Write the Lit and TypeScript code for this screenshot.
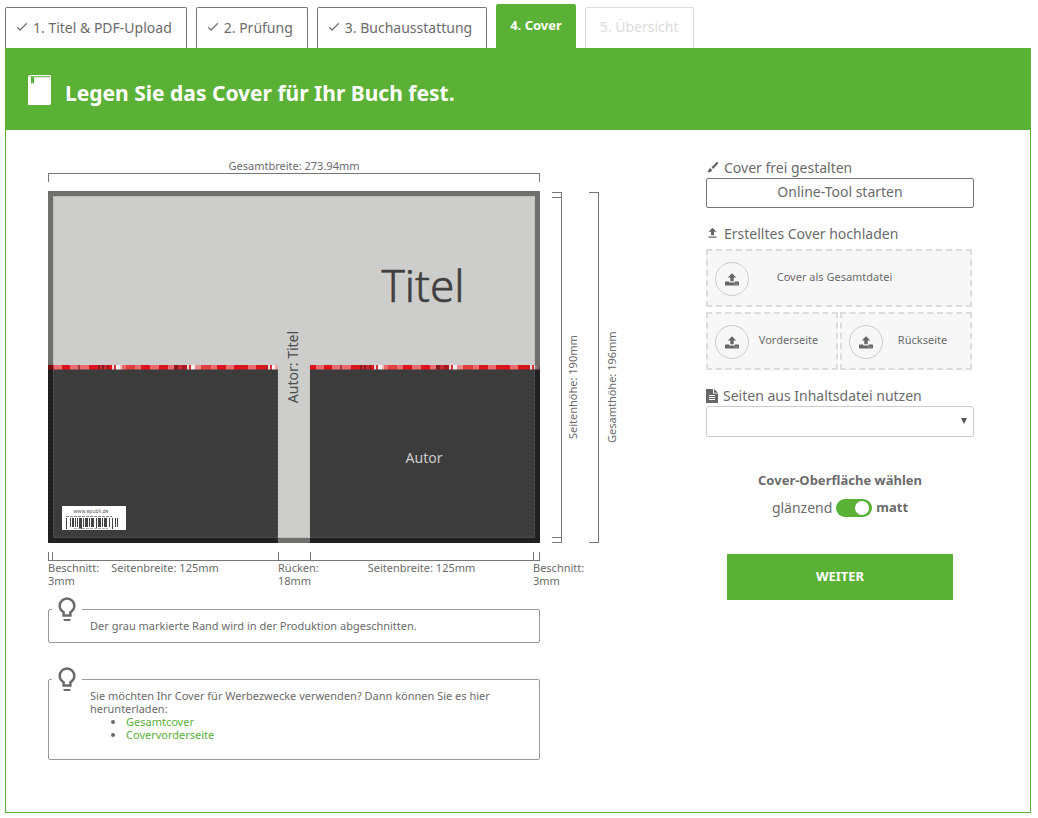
import { LitElement, html, css, svg } from "lit";
import { customElement, state } from "lit/decorators.js";

type Step = { label: string; state: "done" | "active" | "open" };

const STEPS: Step[] = [
  { label: "1. Titel & PDF-Upload", state: "done" },
  { label: "2. Prüfung", state: "done" },
  { label: "3. Buchausstattung", state: "done" },
  { label: "4. Cover", state: "active" },
  { label: "5. Übersicht", state: "open" },
];

// Colour runs of the decorative band: [start, width, colour]
const BAND: [number, number, string][] = [
  [0, 6, "#e2101c"], [6, 8, "#ea6a6e"], [14, 8, "#dc141e"], [22, 8, "#ea6a6e"], [30, 2, "#a83a3e"],
  [32, 9, "#ea6a6e"], [41, 9, "#dc141e"], [50, 2, "#8e1820"], [52, 2, "#c42a30"], [54, 2, "#8e1820"],
  [56, 3, "#c42a30"], [59, 2, "#9e1820"], [61, 3, "#dc141e"], [64, 2, "#f6d6d6"], [66, 2, "#d8303a"],
  [68, 4, "#fbf0ee"], [72, 2, "#f3b9b9"], [74, 4, "#ea6a6e"], [78, 9, "#e2403e"],
  [87, 6, "#ea6a6e"], [93, 9, "#dc141e"], [102, 9, "#ea6a6e"], [111, 9, "#dc141e"], [120, 6, "#ea6a6e"],
  [126, 4, "#8e1820"], [130, 4, "#c42a30"], [134, 5, "#a81820"], [139, 2, "#f6d6d6"],
  [141, 2, "#d8303a"], [143, 4, "#fbf0ee"], [147, 6, "#ea8a8c"], [153, 10, "#e2403e"], [163, 6, "#ea6a6e"],
  [169, 9, "#dc141e"], [178, 8, "#ea6a6e"], [186, 14, "#dc141e"], [200, 8, "#ea6a6e"], [208, 9, "#dc141e"],
  [217, 3, "#c41a20"], [220, 2, "#f6d6d6"], [222, 2, "#d8303a"], [224, 3, "#fbf0ee"], [227, 3, "#f3a9aa"],
];

// Barcode strokes: [start, width]
const BARS: [number, number][] = [
  [0, 1], [4, 1], [6, 2], [9, 1], [11, 1], [13, 3], [17, 1], [19, 3], [23, 1], [25, 3],
  [30, 1], [32, 3], [36, 1], [38, 3], [43, 1], [46, 1], [49, 1], [51, 1],
];

@customElement("app-root")
export class AppRoot extends LitElement {
  @state() private matt = true;

  static styles = css`
    :host {
      display: block;
      box-sizing: border-box;
      padding: 4px 7px 5px 5px;
      color: #6b6b6b;
      background: #fff;
      font: 14px/19px "Noto Sans", sans-serif;
      --green: #5bb036;
    }
    *, *::before, *::after { box-sizing: border-box; }
    button, select { font: inherit; color: inherit; }
    svg { display: block; flex: none; }

    .tabs { display: flex; align-items: flex-end; gap: 9px; }
    .tab {
      display: flex; align-items: center; gap: 5px;
      height: 41px; padding: 0 14px 2px 10px;
      border: 1px solid #777; border-bottom: 0; border-radius: 2px 2px 0 0;
      background: #fff; white-space: nowrap;
    }
    .tab.active {
      height: 44px; padding: 0 14px 2px; border: 0;
      background: var(--green); color: #fff; font-size: 13px; font-weight: 700;
    }
    .tab.open { padding: 0 14px 4px; color: #dcdcdc; border-color: #dcdcdc; }

    .panel { border: 1px solid var(--green); border-top: 0; }
    .head {
      display: flex; align-items: center; gap: 14px;
      padding: 23px 22px 22px; background: var(--green); color: #fff;
    }
    h1 { margin: 0; padding-top: 7px; font-size: 21px; line-height: 30px; font-weight: 700; }
    .body {
      display: grid; grid-template-columns: minmax(0, 1fr) 268px;
      gap: 86px; padding: 28px 56px 52px 42px;
    }

    .design {
      display: grid; grid-template-columns: minmax(0, 1fr) 25px 31px;
      column-gap: 12px; font-size: 11px; line-height: 13px;
    }
    .total { text-align: center; padding: 1px 0; }
    .total-rule { height: 9px; border: 1px solid #777; border-bottom: 0; margin-bottom: 9px; }
    .cover { width: 100%; height: auto; }
    .side { display: flex; align-items: stretch; gap: 4px; padding-top: 1px; }
    .side.outer { gap: 6px; }
    .side span {
      writing-mode: vertical-rl; transform: rotate(180deg);
      text-align: center; white-space: nowrap; margin-top: 40px;
    }
    .bracket { width: 10px; flex: none; border: 1px solid #777; border-left: 0; }
    .bracket.inner { padding: 4px 0; }
    .bracket.inner::before {
      content: ""; display: block; height: 100%;
      border: 1px solid #777; border-width: 1px 0;
    }
    .widths {
      display: grid;
      grid-template-columns:
        minmax(0, 4fr) minmax(0, 226fr) minmax(0, 32fr) minmax(0, 223fr) minmax(0, 7fr);
      margin-top: 9px;
    }
    .tick { height: 9px; border: 1px solid #777; border-width: 0 0 1px 1px; }
    .tick:last-of-type { border-right-width: 1px; }
    .widths span { text-align: center; white-space: nowrap; }
    .widths .edge { text-align: left; }
    .first { grid-column: 1; }

    .notes { grid-column: 1; display: grid; gap: 36px; margin-top: 22px; }
    .note {
      position: relative; padding: 9px 40px 10px 41px;
      border: 1px solid #999; border-radius: 2px;
    }
    .note p, .note ul { margin: 0; }
    .note ul { padding-left: 36px; margin-bottom: 8px; }
    .note a { color: var(--green); text-decoration: none; }
    .bulb { position: absolute; left: 3px; top: -13px; background: #fff; }

    .options { display: flex; flex-direction: column; }
    .caption { display: flex; align-items: center; gap: 5px; margin-bottom: 1px; white-space: nowrap; }
    .tool {
      height: 30px; margin-bottom: 16px; padding: 0 0 3px;
      border: 1px solid #777; border-radius: 2px; background: #fff;
    }
    .uploads {
      display: grid; grid-template-columns: 1fr 1fr; gap: 5px 2px;
      margin: 5px 2px 16px 0; font-size: 11px;
    }
    .drop {
      position: relative;
      display: flex; align-items: center; height: 58px; padding: 2px 8px 0 7px;
      border: 2px dashed #dcdcdc; background: #f7f7f7;
      text-align: center; cursor: pointer;
    }
    .drop.wide { grid-column: 1 / -1; padding-right: 50px; }
    .drop span { flex: 1; padding-bottom: 6px; }
    .drop input { position: absolute; width: 1px; height: 1px; opacity: 0; }
    .disc {
      display: grid; place-items: center; width: 34px; height: 34px; flex: none;
      border: 1px solid #ccc; border-radius: 50%; color: #666;
    }
    .pick { position: relative; }
    .pick select {
      width: 100%; height: 31px; display: block; appearance: none;
      border: 1px solid #ccc; border-radius: 3px; background: #fff;
    }
    .pick svg { position: absolute; right: 7px; top: 12px; pointer-events: none; }
    .finish { margin: 34px 0 0; text-align: center; font-size: 13px; line-height: 19px; font-weight: 700; }
    .surface { display: flex; justify-content: center; align-items: center; gap: 4px; margin-top: 8px; }
    .surface strong { font-size: 13px; font-weight: 700; }
    .switch {
      appearance: none; width: 36px; height: 18px; margin: 0; padding: 2px 3px;
      display: flex; border-radius: 9px; background: #bbb;
    }
    .switch:checked { background: var(--green); justify-content: flex-end; }
    .switch::before { content: ""; width: 14px; height: 14px; border-radius: 50%; background: #fff; }
    .next {
      align-self: center; width: 226px; height: 46px; margin-top: 37px; padding: 0 0 2px;
      border: 0; background: var(--green); color: #fff; font-size: 13px; font-weight: 700;
    }
  `;

  private bulb() {
    return html`<svg class="bulb" width="30" height="26" viewBox="0 0 30 26" aria-hidden="true">
      <path fill="none" stroke="#6b6b6b" stroke-width="2.5" d="M11.600 18.600h6.800v-3.400c2-1.300 3.900-3.300 3.900-6.300a7.300 7.300 0 0 0-14.600 0c0 3 1.900 5 3.900 6.300z"/>
      <path fill="#6b6b6b" d="M11.400 22h7.200v.8c0 .7-.5 1.200-1.200 1.200h-4.800c-.7 0-1.200-.5-1.200-1.200z"/>
    </svg>`;
  }

  private drop(label: string, wide = false) {
    return html`<label class="drop ${wide ? "wide" : ""}">
      <input type="file" />
      <i class="disc"><svg width="14" height="14" viewBox="0 0 14 14" aria-hidden="true">
        <path fill="currentColor" d="M7 1.300 11.200 5.500H8.700V9.300H5.300V5.500H2.800z" />
        <path fill="currentColor" d="M1 9.500H4.300V10.500H9.700V9.500H13C13.500 9.500 14 9.800 14 10.300V12.700C14 13.200 13.500 13.500 13 13.500H1C.5 13.500 0 13.200 0 12.700V10.300C0 9.800.5 9.500 1 9.500z" />
        <path fill="#ccc" d="M9.300 11.600h1v1h-1zM11.500 11.600h1v1h-1z" />
      </svg></i>
      <span>${label}</span>
    </label>`;
  }

  private band(x: number) {
    return svg`<g transform="translate(${x} 174)">${BAND.map(
      ([start, width, fill]) => svg`<rect x=${start} width=${width} height="4.500" fill=${fill} />`
    )}</g>`;
  }

  private cover() {
    return html`<svg class="cover" viewBox="0 0 492 352" role="img" aria-label="Cover-Vorschau" font-family="Noto Sans, sans-serif">
      <rect width="492" height="352" fill="#cdcdcb" />
      <rect y="176" width="230" height="176" fill="#3c3c3c" />
      <rect x="262" y="176" width="230" height="176" fill="#3c3c3c" />
      ${this.band(0)} ${this.band(262)}
      <path d="M0 0H492V352H0zM5 5V347H487V5z" fill="#000" fill-opacity=".46" />
      <path d="M5.500 5.500H486.500V346.500H5.500z" fill="none" stroke="#888" stroke-opacity=".4" stroke-dasharray="2 2" />
      <path d="M229.500 0V352M261.500 0V352" fill="none" stroke="#999" stroke-opacity=".2" stroke-dasharray="2 2" />
      <text x="375" y="111" font-size="44" font-weight="300" fill="#404040" stroke="#404040" stroke-width=".6" text-anchor="middle">Titel</text>
      <text x="376" y="272" font-size="14" fill="#cdcdcb" text-anchor="middle">Autor</text>
      <text transform="translate(250 176) rotate(-90)" font-size="14" fill="#4a4a4a" text-anchor="middle">Autor: Titel</text>
      <rect x="14" y="315" width="64" height="24" fill="#fff" />
      <text x="43" y="322" font-size="5" fill="#555" text-anchor="middle">www.epubli.de</text>
      <path d="M18 325.500H64" stroke="#888" stroke-dasharray="3 1" />
      ${BARS.map(([x, width], i) => svg`<rect x=${18 + x} y="327" width=${width} height=${i % 5 === 0 ? 11 : 9} fill="#444" />`)}
      <path d="M26 337.500H60" stroke="#aaa" stroke-dasharray="3 1" />
    </svg>`;
  }

  render() {
    return html`
      <nav class="tabs">
        ${STEPS.map(
          (s) => html`<button class="tab ${s.state}" ?disabled=${s.state === "open"}>
            ${s.state === "done"
              ? html`<svg width="12" height="12" viewBox="0 0 12 12" aria-hidden="true"><path d="M1.200 6.300 4 9 10.800 2.300" fill="none" stroke="#777" stroke-width="1.300" /></svg>`
              : ""}${s.label}
          </button>`
        )}
      </nav>
      <main class="panel">
        <header class="head">
          <svg width="23" height="30" viewBox="0 0 23 30" aria-hidden="true">
            <path fill="#fff" d="M2.500 0H23V28.500L22 30H0V2.500C0 1 1 0 2.500 0z" />
            <path fill="#5bb036" d="M2.500 1.300H22.200V2.200H6V9L4.500 7.600 3 9V2.200H1.500z" />
          </svg>
          <h1>Legen Sie das Cover für Ihr Buch fest.</h1>
        </header>
        <div class="body">
          <section class="design">
            <div class="first">
              <div class="total">Gesamtbreite: 273.94mm</div>
              <div class="total-rule"></div>
            </div>
            <div class="first">${this.cover()}</div>
            <div class="side"><div class="bracket inner"></div><span>Seitenhöhe: 190mm</span></div>
            <div class="side outer"><div class="bracket"></div><span>Gesamthöhe: 196mm</span></div>
            <div class="widths first">
              <div class="tick"></div><div class="tick"></div><div class="tick"></div><div class="tick"></div><div class="tick"></div>
              <span class="edge">Beschnitt:<br />3mm</span>
              <span>Seitenbreite: 125mm</span>
              <span>Rücken:<br />18mm</span>
              <span>Seitenbreite: 125mm</span>
              <span class="edge">Beschnitt:<br />3mm</span>
            </div>
            <div class="notes">
              <div class="note">${this.bulb()}<p>Der grau markierte Rand wird in der Produktion abgeschnitten.</p></div>
              <div class="note">
                ${this.bulb()}
                <p>Sie möchten Ihr Cover für Werbezwecke verwenden? Dann können Sie es hier herunterladen:</p>
                <ul>
                  <li><a href="#gesamtcover">Gesamtcover</a></li>
                  <li><a href="#covervorderseite">Covervorderseite</a></li>
                </ul>
              </div>
            </div>
          </section>
          <section class="options">
            <div class="caption">
              <svg width="13" height="13" viewBox="0 0 13 13" aria-hidden="true"><path fill="#666" d="M12 1.200c-.5-.5-1.100-.3-1.500 0L5.500 6.300l1.700 1.700L12 2.700c.3-.4.4-1 0-1.500zM4.600 7.200c-1.200 0-1.700.7-1.900 1.700-.2.900-.9 1.500-1.700 1.700 1 1.200 4.500 1 5.100-1.700z" /></svg>
              <span id="design-label">Cover frei gestalten</span>
            </div>
            <button class="tool" aria-describedby="design-label">Online-Tool starten</button>
            <div class="caption">
              <svg width="13" height="13" viewBox="0 0 13 13" aria-hidden="true"><path fill="#666" d="M6.500 .8 10.500 4.800H8V8.300H5V4.800H2.500zM2.500 9.500h8V10.700h-8z" /></svg>
              <span>Erstelltes Cover hochladen</span>
            </div>
            <div class="uploads">
              ${this.drop("Cover als Gesamtdatei", true)} ${this.drop("Vorderseite")} ${this.drop("Rückseite")}
            </div>
            <label class="caption" for="pages">
              <svg width="12" height="14" viewBox="0 0 12 14" aria-hidden="true"><path fill="#666" d="M0 0H7V4.500H12V14H0z" /><path fill="#666" d="M8 0 12 3.700H8z" /><path stroke="#fff" d="M3 6.500H9M3 8.500H9M3 10.500H9" /></svg>
              <span>Seiten aus Inhaltsdatei nutzen</span>
            </label>
            <div class="pick">
              <select id="pages"><option></option></select>
              <svg width="6" height="6" viewBox="0 0 6 6" aria-hidden="true"><path fill="#555" d="M0 0H6L3 6z" /></svg>
            </div>
            <h2 class="finish">Cover-Oberfläche wählen</h2>
            <label class="surface">
              <span>glänzend</span>
              <input class="switch" type="checkbox" role="switch" .checked=${this.matt}
                @change=${(e: Event) => (this.matt = (e.target as HTMLInputElement).checked)} />
              <strong>matt</strong>
            </label>
            <button class="next">WEITER</button>
          </section>
        </div>
      </main>
    `;
  }
}
